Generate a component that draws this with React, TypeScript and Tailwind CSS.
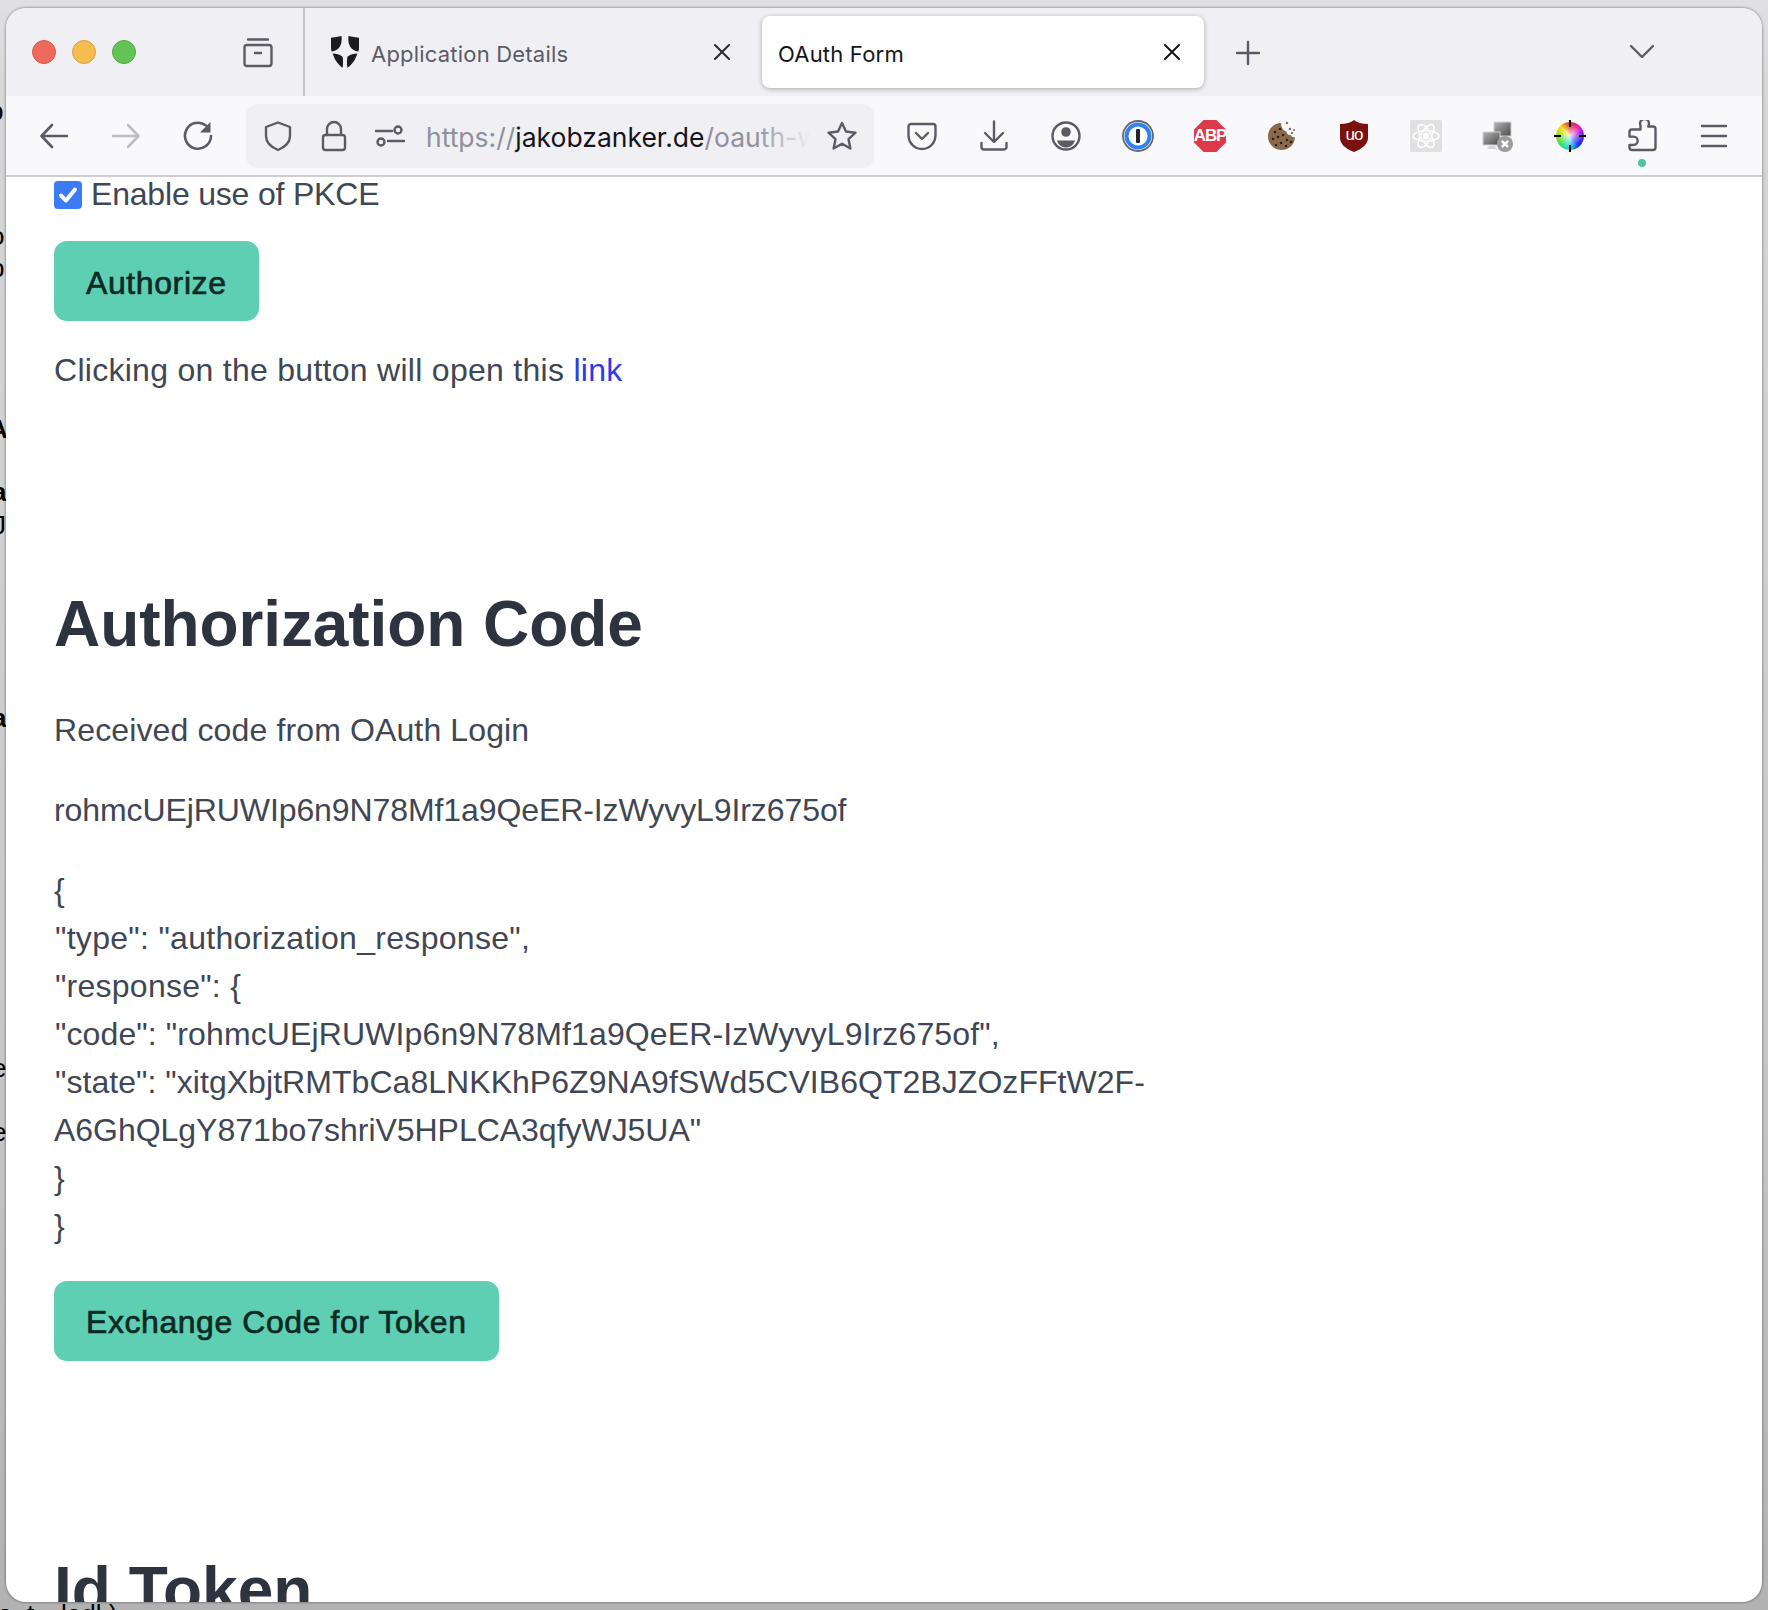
// App.tsx
import React from "react";

const ink = "#5b5b66";

const ToolIcon: React.FC<{ children: React.ReactNode }> = ({ children }) => (
  <div className="relative flex h-[72px] w-[72px] shrink-0 items-center justify-center">{children}</div>
);

const Stroke: React.FC<{ size?: number; color?: string; width?: number; children: React.ReactNode }> = ({
  size = 32,
  color = ink,
  width = 2.4,
  children,
}) => (
  <svg width={size} height={size} viewBox="0 0 32 32" fill="none" stroke={color} strokeWidth={width} strokeLinecap="round" strokeLinejoin="round">
    {children}
  </svg>
);

const CloseIcon: React.FC<{ color: string }> = ({ color }) => (
  <svg width="18" height="18" viewBox="0 0 18 18" fill="none" stroke={color} strokeWidth="2" strokeLinecap="round">
    <path d="M2 2l14 14M16 2L2 16" />
  </svg>
);

// logo of the first tab
const ShieldFavicon = () => (
  <svg width="28" height="32" viewBox="0 0 28 32" fill="#1c1b1f">
    <path d="M10.5 0C7 .8 3.4 1.4 0 1.8V12c0 1.2.2 2.4.6 3.5 3.8-.2 7-2.2 8.6-5.4C10.6 7 11 3.4 10.5 0z" />
    <path d="M17.5 0c3.5.8 7.1 1.4 10.5 1.8V12c0 1.2-.2 2.4-.6 3.5-3.8-.2-7-2.2-8.6-5.4C17.4 7 17 3.4 17.5 0z" />
    <path d="M1.6 17.6c3.6.1 7.2 1 10 3.2.6 3.600.6 7.400 0 11C7.400 29.400 3.600 24 1.600 17.600z" />
    <path d="M26.400 17.600c-3.600.1-7.200 1-10 3.200-.6 3.600-.6 7.400 0 11 4.200-2.400 8-7.800 10-14.200z" />
  </svg>
);

const CookieIcon = () => (
  <svg width="32" height="32" viewBox="0 0 32 32">
    <path d="M15 3C8 3 2 9 2 16.500S8 30 15.500 30 29 24 29 17c-2 .6-3.500 0-4-2-2.500.4-4.500-1-4.500-3.500C17.500 11 15 7.500 15 3z" fill="#8a6a4a" />
    {[[9, 12], [14, 9], [7, 19], [12, 17], [17, 15], [21, 20], [15, 23], [10, 25], [20, 26], [25, 22]].map(([x, y]) => (
      <circle key={`${x}-${y}`} cx={x} cy={y} r="1.300" fill="#2f2015" />
    ))}
    <circle cx="21" cy="3" r="1.200" fill="#8a6a4a" />
    <circle cx="24" cy="9" r="1.300" fill="#8a6a4a" />
    <circle cx="28" cy="10" r="1" fill="#8a6a4a" />
    <circle cx="26" cy="13" r="1" fill="#6d5238" />
  </svg>
);

const ReactIcon = () => (
  <div className="flex h-[32px] w-[32px] items-center justify-center rounded-[2px] bg-[#e1e1e1]">
    <svg width="30" height="30" viewBox="0 0 30 30" fill="none" stroke="#fff" strokeWidth="1.500">
      <circle cx="15" cy="15" r="2.600" fill="#fff" />
      <ellipse cx="15" cy="15" rx="13" ry="5.200" />
      <ellipse cx="15" cy="15" rx="13" ry="5.200" transform="rotate(60 15 15)" />
      <ellipse cx="15" cy="15" rx="13" ry="5.200" transform="rotate(120 15 15)" />
    </svg>
  </div>
);

const NetworkIcon = () => (
  <svg width="32" height="32" viewBox="0 0 32 32">
    <defs>
      <linearGradient id="screen" x1="0" y1="0" x2="1" y2="1">
        <stop offset="0" stopColor="#b5b5b5" />
        <stop offset="1" stopColor="#4a4a4a" />
      </linearGradient>
    </defs>
    <rect x="12" y="2" width="17" height="14" fill="url(#screen)" stroke="#cfcfcf" />
    <rect x="1" y="12" width="17" height="13" fill="url(#screen)" stroke="#cfcfcf" />
    <path d="M5 29h10l-2-3H7z" fill="#d5d5d5" />
    <circle cx="23" cy="24" r="8" fill="#9b9b9b" />
    <path d="M19.800 20.800l6.400 6.400M26.200 20.800l-6.400 6.400" stroke="#fff" strokeWidth="2.600" />
  </svg>
);

const App: React.FC = () => {
  return (
    <div className="relative h-[1610px] w-[1768px] overflow-hidden bg-[linear-gradient(180deg,#e0dfe2_0px,#d6d6d6_120px,#c9c9c9_1000px,#b2b2b2_1610px)] font-['Liberation_Sans',sans-serif]">
      {/* scraps of the window behind */}
      <span className="absolute left-[-11px] top-[97px] text-[26px] leading-[28px] text-black">p</span>
      <span className="absolute left-[-10px] top-[222px] text-[26px] leading-[28px] text-black">o</span>
      <span className="absolute left-[-10px] top-[254px] text-[26px] leading-[28px] text-black">p</span>
      <span className="absolute left-[-11px] top-[415px] text-[26px] font-bold leading-[28px] text-black">A</span>
      <span className="absolute left-[-8px] top-[478px] text-[26px] font-bold leading-[28px] text-black">a</span>
      <span className="absolute left-[-7px] top-[511px] text-[26px] leading-[28px] text-black">J</span>
      <span className="absolute left-[-8px] top-[704px] text-[26px] font-bold leading-[28px] text-black">a</span>
      <span className="absolute left-[-8px] top-[1054px] text-[26px] leading-[28px] text-black">e</span>
      <span className="absolute left-[-8px] top-[1118px] text-[26px] leading-[28px] text-black">e</span>
      <span className="absolute left-[-2px] top-[1600px] whitespace-nowrap text-[26px] leading-[28px] text-black">a&nbsp;&nbsp;t</span>
      <span className="absolute left-[61px] top-[1600px] whitespace-nowrap text-[26px] leading-[28px] text-black">ladl )</span>

      {/* browser window */}
      <div className="absolute left-[6px] top-[8px] flex h-[1594px] w-[1756px] flex-col overflow-hidden rounded-[20px] bg-white shadow-[0_0_3px_rgba(0,0,0,0.55)]">
        {/* tab strip */}
        <div className="flex h-[88px] shrink-0 bg-[#f0f0f4]">
          <div className="flex w-[297px] shrink-0 items-center pb-[1px] pl-[26px]">
            <div className="h-[24px] w-[24px] rounded-full border border-[#d9574c] bg-[#ee6a5f]" />
            <div className="ml-[16px] h-[24px] w-[24px] rounded-full border border-[#d8a13c] bg-[#f5bd4f]" />
            <div className="ml-[16px] h-[24px] w-[24px] rounded-full border border-[#52a845] bg-[#61c454]" />
            <div className="ml-[106px]">
              <Stroke>
                <rect x="2.500" y="9" width="27" height="21" rx="2.500" />
                <path d="M6 3.500h20M13 17h6" />
              </Stroke>
            </div>
          </div>
          <div className="w-[2px] shrink-0 bg-[#c6c6c9]" />
          <div className="flex w-[457px] shrink-0 items-center pl-[26px]">
            <ShieldFavicon />
            <span className="ml-[12px] pt-[5px] font-['Inter',sans-serif] text-[22px] tracking-[0.2px] text-[#5b5b66]">Application Details</span>
            <div className="ml-auto mr-[31px] flex">
              <CloseIcon color="#2b2a33" />
            </div>
          </div>
          <div className="mt-[8px] flex h-[72px] w-[442px] shrink-0 items-center rounded-[8px] bg-white pl-[16px] shadow-[0_1px_5px_rgba(0,0,0,0.3)]">
            <span className="pt-[4px] font-['Inter',sans-serif] text-[22px] tracking-[0.2px] text-[#15141a]">OAuth Form</span>
            <div className="ml-auto mr-[23px] flex">
              <CloseIcon color="#15141a" />
            </div>
          </div>
          <div className="ml-[30px] flex w-[28px] items-center justify-center">
            <svg width="26" height="26" viewBox="0 0 26 26" stroke={ink} strokeWidth="2.400" strokeLinecap="round" className="mt-[1px]">
              <path d="M13 2v22M2 13h22" />
            </svg>
          </div>
          <div className="ml-[367px] flex w-[26px] items-center justify-center">
            <svg width="26" height="14" viewBox="0 0 26 14" fill="none" stroke={ink} strokeWidth="2.400" strokeLinecap="round" strokeLinejoin="round" className="mb-[3px]">
              <path d="M2 2l11 11L24 2" />
            </svg>
          </div>
        </div>

        {/* toolbar */}
        <div className="flex h-[81px] shrink-0 items-start border-b-2 border-[#cfcfd3] bg-[#f9f9fb] pl-[12px] pt-[4px]">
          <ToolIcon>
            <Stroke width={2.600}>
              <path d="M29 16H4M14 5L3.500 16 14 27" />
            </Stroke>
          </ToolIcon>
          <ToolIcon>
            <Stroke color="#bdbdc1" width={2.600}>
              <path d="M3 16h25M18 5l10.500 11L18 27" />
            </Stroke>
          </ToolIcon>
          <ToolIcon>
            <Stroke width={2.600}>
              <path d="M24 5.500A13 13 0 1 0 29 16" />
              <path d="M28.500 2v10.500H18z" fill={ink} stroke="none" />
            </Stroke>
          </ToolIcon>
          <div className="ml-[12px] mt-[4px] flex h-[64px] w-[628px] shrink-0 items-center rounded-[12px] bg-[#f0f0f4]">
            <div className="ml-[16px] flex">
              <Stroke size={32}>
                <path d="M16 2.500l12 4.500v9c0 6.500-5 11-12 14-7-3-12-7.500-12-14V7z" />
              </Stroke>
            </div>
            <div className="ml-[24px] flex">
              <Stroke>
                <rect x="5" y="15" width="22" height="15" rx="2.500" />
                <path d="M9 15V9a7 7 0 0 1 14 0v6" />
              </Stroke>
            </div>
            <div className="ml-[24px] flex">
              <Stroke>
                <path d="M2 11h16M14 21h16" />
                <circle cx="24" cy="10" r="3.500" />
                <circle cx="7" cy="22" r="3.500" />
              </Stroke>
            </div>
            <div className="relative ml-[20px] w-[385px] overflow-hidden whitespace-nowrap pt-[4px] font-['Inter',sans-serif] text-[26.5px] text-[#8f8f9d]">
              https://<span className="text-[#15141a]">jakobzanker.de</span>/oauth-workflow
              <div className="absolute inset-y-0 right-0 w-[56px] bg-[linear-gradient(90deg,rgba(240,240,244,0),#f0f0f4)]" />
            </div>
            <div className="ml-[15px] flex">
              <Stroke>
                <path d="M16 3l4 8.500 9.500 1.200-7 6.500 1.900 9.300L16 23.800 7.600 28.500l1.900-9.300-7-6.500 9.500-1.200z" />
              </Stroke>
            </div>
          </div>
          <div className="ml-[12px] flex">
            <ToolIcon>
              <Stroke>
                <path d="M5 4h22a2.500 2.500 0 0 1 2.500 2.500V15c0 8-6 14-13.500 14S2.500 23 2.500 15V6.500A2.500 2.500 0 0 1 5 4z" />
                <path d="M10 13l6 6 6-6" />
              </Stroke>
            </ToolIcon>
            <ToolIcon>
              <Stroke>
                <path d="M16 1.500v20M7 13l9 9 9-9M3.500 23v4a2.500 2.500 0 0 0 2.500 2.500h20a2.500 2.500 0 0 0 2.500-2.500v-4" />
              </Stroke>
            </ToolIcon>
            <ToolIcon>
              <Stroke>
                <circle cx="16" cy="16" r="13.500" />
                <circle cx="16" cy="12" r="4.800" fill={ink} stroke="none" />
                <path d="M7 20.500h18c-1.400 4.500-5 7-9 7s-7.600-2.500-9-7z" fill={ink} stroke="none" />
              </Stroke>
            </ToolIcon>
            <ToolIcon>
              <svg width="32" height="32" viewBox="0 0 32 32">
                <circle cx="16" cy="16" r="15" fill="#fff" stroke="#66666e" strokeWidth="1.800" />
                <circle cx="16" cy="16" r="11.500" fill="#fff" stroke="#2f84f2" strokeWidth="4" />
                <rect x="14" y="9" width="4" height="14" rx="1" fill="#24242a" />
              </svg>
            </ToolIcon>
            <ToolIcon>
              <div className="flex h-[32px] w-[32px] items-center justify-center bg-[#dc3a4b] [clip-path:polygon(30%_0,70%_0,100%_30%,100%_70%,70%_100%,30%_100%,0_70%,0_30%)]">
                <span className="text-[17px] font-bold tracking-[-1.2px] text-white">ABP</span>
              </div>
            </ToolIcon>
            <ToolIcon>
              <CookieIcon />
            </ToolIcon>
            <ToolIcon>
              <div className="relative flex h-[32px] w-[28px] items-center justify-center">
                <svg width="28" height="32" viewBox="0 0 28 32" className="absolute inset-0">
                  <path d="M14 0c3 2.500 8 4 14 4v14c0 6-6 11-14 14C6 29 0 24 0 18V4c6 0 11-1.500 14-4z" fill="#7b110c" />
                </svg>
                <span className="relative mt-[-2px] text-[17px] tracking-[-1px] text-white">uo</span>
              </div>
            </ToolIcon>
            <ToolIcon>
              <ReactIcon />
            </ToolIcon>
            <ToolIcon>
              <NetworkIcon />
            </ToolIcon>
            <ToolIcon>
              <div className="relative h-[28px] w-[28px] rounded-full bg-[conic-gradient(#e03020,#f020c0,#7020e0,#1030f0,#20d0f0,#30e070,#90e020,#f0e020,#e03020)]">
                <div className="absolute inset-0 rounded-full bg-[radial-gradient(rgba(255,255,255,0.85),rgba(255,255,255,0)_60%)]" />
                <div className="absolute left-[13px] top-[-2px] h-[32px] w-[2px] bg-[linear-gradient(180deg,#000_22%,transparent_22%,transparent_78%,#000_78%)]" />
                <div className="absolute left-[-2px] top-[13px] h-[2px] w-[32px] bg-[linear-gradient(90deg,#000_22%,transparent_22%,transparent_78%,#000_78%)]" />
              </div>
            </ToolIcon>
            <ToolIcon>
              <Stroke>
                <path d="M14 3.500a4.500 4.500 0 0 1 9 0c0 1-.3 1.700-.7 3h4.700a2.500 2.500 0 0 1 2.500 2.500v18.500a2.500 2.500 0 0 1-2.500 2.500H6a2.500 2.500 0 0 1-2.500-2.500V25h4a4.200 4.200 0 0 0 0-8.400h-4V12A2.500 2.500 0 0 1 6 9.500h8.500V6z" />
              </Stroke>
              <div className="absolute bottom-[5px] left-[32px] h-[8px] w-[8px] rounded-full bg-[#54c2a4]" />
            </ToolIcon>
            <ToolIcon>
              <Stroke>
                <path d="M4 6h24M4 16h24M4 26h24" />
              </Stroke>
            </ToolIcon>
          </div>
        </div>

        {/* page */}
        <div className="min-h-0 flex-1 overflow-hidden pl-[48px] text-[32px] leading-[48px] text-[#3f4654]">
          <label className="-mt-[7px] flex items-center">
            <span className="mt-[2px] flex h-[28px] w-[28px] items-center justify-center rounded-[4px] bg-[#3b7cf6]">
              <svg width="24" height="24" viewBox="0 0 24 24" fill="none" stroke="#fff" strokeWidth="4" strokeLinecap="round" strokeLinejoin="round">
                <path d="M5 12.500l5 5 9-11" />
              </svg>
            </span>
            <span className="ml-[9px] tracking-[-0.19px]">Enable use of PKCE</span>
          </label>
          <button className="mt-[23px] block h-[80px] rounded-[13px] bg-[#5fcfb3] px-[32px] pt-[3px] tracking-[0.6px] text-[#0c2a25] [-webkit-text-stroke:0.7px_#0c2a25]">Authorize</button>
          <p className="mt-[25px] tracking-[0.28px]">
            Clicking on the button will open this <a className="text-[#2d3be6]">link</a>
          </p>
          <h2 className="mt-[194px] text-[64px] font-bold leading-[72px] tracking-[-0.08px] text-[#2d3440]">Authorization Code</h2>
          <p className="mt-[46px] tracking-[0.13px]">Received code from OAuth Login</p>
          <p className="mt-[32px] tracking-[-0.09px]">rohmcUEjRUWIp6n9N78Mf1a9QeER-IzWyvyL9Irz675of</p>
          <div className="mt-[32px] w-[1100px]">
            <p>{"{"}</p>
            <p className="pl-[1px] tracking-[0.3px]">"type": "authorization_response",</p>
            <p className="pl-[1px] tracking-[0.25px]">"response": {"{"}</p>
            <p className="pl-[1px] tracking-[0.12px]">"code": "rohmcUEjRUWIp6n9N78Mf1a9QeER-IzWyvyL9Irz675of",</p>
            <p className="pl-[1px] tracking-[0.05px]">"state": "xitgXbjtRMTbCa8LNKKhP6Z9NA9fSWd5CVIB6QT2BJZOzFFtW2F-</p>
            <p className="tracking-[-0.03px]">A6GhQLgY871bo7shriV5HPLCA3qfyWJ5UA"</p>
            <p>{"}"}</p>
            <p>{"}"}</p>
          </div>
          <button className="mt-[31px] block h-[80px] rounded-[13px] bg-[#5fcfb3] px-[32px] pt-[2px] tracking-[0.56px] text-[#0c2a25] [-webkit-text-stroke:0.7px_#0c2a25]">Exchange Code for Token</button>
          <h2 className="mt-[193px] text-[64px] font-bold leading-[72px] text-[#2d3440]">Id Token</h2>
        </div>
      </div>
    </div>
  );
};

export default App;
